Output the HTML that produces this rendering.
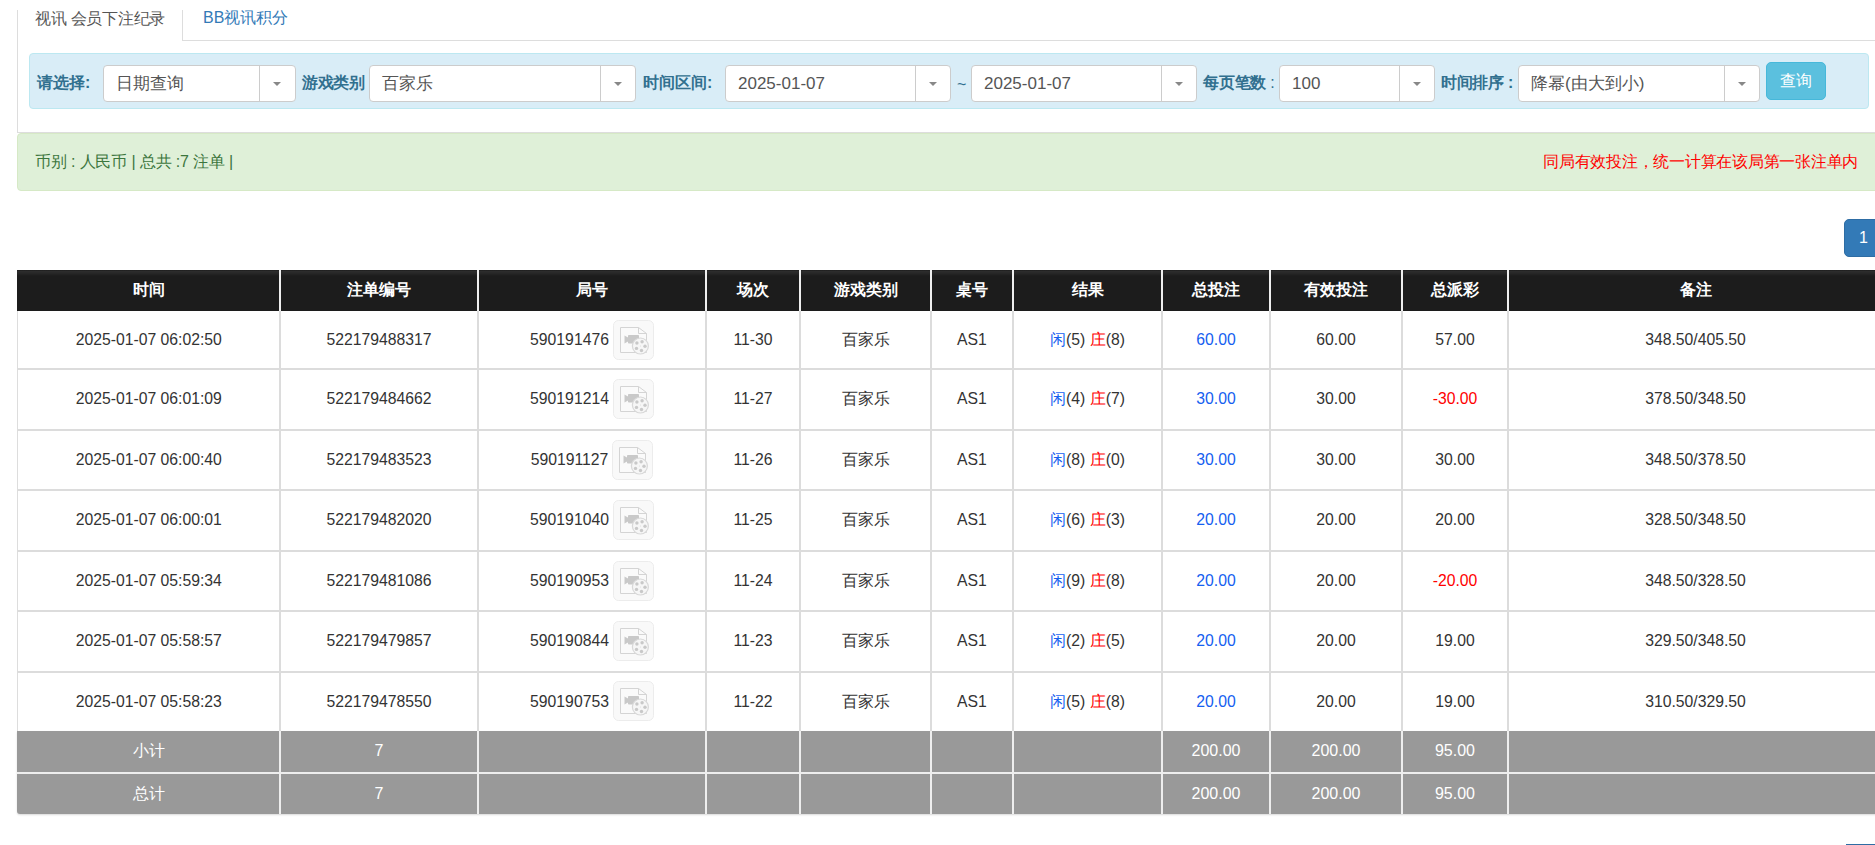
<!DOCTYPE html>
<html><head><meta charset="utf-8">
<style>
*{box-sizing:border-box;margin:0;padding:0}
html,body{width:1875px;height:845px;overflow:hidden;background:#fff;font-family:"Liberation Sans",sans-serif;color:#333;position:relative}
div{position:absolute;white-space:nowrap}
.c{text-align:center;font-size:15.75px;color:#333}
.h{text-align:center;font-size:16px;color:#fff;font-weight:bold}
.s{text-align:center;font-size:16px;color:#fff}
.blue{color:#1560f0} .red{color:#f00}
.ic{vertical-align:middle;margin-left:4px;position:relative;top:-1px}
.lbl{top:73px;font-size:16px;font-weight:bold;color:#31708f;line-height:20px}
.sel{top:65px;height:37px;background:#fff;border:1px solid #ccc;border-radius:4px}
.sel .v{left:12px;top:0;line-height:35px;font-size:17px;color:#555}
.sel .d{top:0;bottom:0;width:1px;background:#ccc}
.sel .ar{top:16px;width:0;height:0;border-left:4px solid transparent;border-right:4px solid transparent;border-top:4.5px solid #888}
</style></head><body>

<div style="left:17px;top:10px;width:1px;height:122px;background:#ddd"></div>
<div style="left:182px;top:10px;width:1px;height:31px;background:#ddd"></div>
<div style="left:182px;top:40px;width:1693px;height:1px;background:#ddd"></div>
<div style="left:35px;top:9px;font-size:16px;line-height:20px;color:#555;letter-spacing:-0.25px">视讯 会员下注纪录</div>
<div style="left:203px;top:8px;font-size:16px;line-height:20px;color:#337ab7">BB视讯积分</div>
<div style="left:29px;top:53px;width:1840px;height:56px;background:#d9edf7;border:1px solid #bce8f1;border-radius:4px"></div>
<div class="sel" style="left:103px;width:193px"><div class="v">日期查询</div><div class="d" style="left:155px"></div><div class="ar" style="left:169.0px"></div></div>
<div class="sel" style="left:369px;width:267px"><div class="v">百家乐</div><div class="d" style="left:230px"></div><div class="ar" style="left:243.5px"></div></div>
<div class="sel" style="left:725px;width:226px"><div class="v">2025-01-07</div><div class="d" style="left:189px"></div><div class="ar" style="left:202.5px"></div></div>
<div class="sel" style="left:971px;width:226px"><div class="v">2025-01-07</div><div class="d" style="left:189px"></div><div class="ar" style="left:202.5px"></div></div>
<div class="sel" style="left:1279px;width:156px"><div class="v">100</div><div class="d" style="left:119px"></div><div class="ar" style="left:132.5px"></div></div>
<div class="sel" style="left:1518px;width:242px"><div class="v">降幂(由大到小)</div><div class="d" style="left:205px"></div><div class="ar" style="left:218.5px"></div></div>
<div class="lbl" style="left:37px">请选择:</div>
<div class="lbl" style="left:302px;letter-spacing:-0.5px">游戏类别</div>
<div class="lbl" style="left:643px">时间区间:</div>
<div style="left:957px;top:75px;font-size:16px;line-height:20px;color:#31708f">~</div>
<div class="lbl" style="left:1203px;letter-spacing:-0.25px">每页笔数<span style="font-weight:normal"> :</span></div>
<div class="lbl" style="left:1441px;letter-spacing:-0.3px">时间排序 :</div>
<div style="left:1766px;top:62px;width:60px;height:38px;background:#5bc0de;border:1px solid #46b8da;border-radius:5px;color:#fff;font-size:16px;text-align:center;line-height:36px">查询</div>
<div style="left:17px;top:132px;width:1870px;height:1px;background:#ddd"></div>
<div style="left:17px;top:133px;width:1880px;height:58px;background:#dff0d8;border:1px solid #d6e9c6;border-radius:4px 0 0 4px"></div>
<div style="left:35px;top:152px;font-size:16px;line-height:20px;color:#3c763d;letter-spacing:-0.15px">币别 : 人民币 | 总共 :7 注单 |</div>
<div style="right:17px;top:152px;font-size:16px;line-height:20px;color:#f00;letter-spacing:-0.25px">同局有效投注，统一计算在该局第一张注单内</div>
<div style="left:1844px;top:219px;width:50px;height:38px;background:#337ab7;border:1px solid #2e6da4;border-radius:5px;color:#fff;font-size:16px;line-height:36px;padding-left:14px">1</div>
<div style="left:1846px;top:844px;width:40px;height:4px;background:#337ab7;border-top:1px solid #2e6da4"></div>
<div style="left:17px;top:270px;width:1870px;height:41px;background:linear-gradient(#1c1c1c 0px,#2c2c2c 1.5px,#262626 3.5px,#1c1c1c 6px)"></div>
<div style="left:17px;top:311px;width:1870px;height:420px;background:#fff;border-left:1px solid #ddd"></div>
<div style="left:17px;top:731px;width:1870px;height:83px;background:#999;border-radius:0 0 0 3px;box-shadow:0 1px 2px rgba(0,0,0,.15)"></div>
<div style="left:17px;top:368px;width:1870px;height:2px;background:#dcdcdc"></div>
<div style="left:17px;top:429px;width:1870px;height:2px;background:#dcdcdc"></div>
<div style="left:17px;top:489px;width:1870px;height:2px;background:#dcdcdc"></div>
<div style="left:17px;top:550px;width:1870px;height:2px;background:#dcdcdc"></div>
<div style="left:17px;top:610px;width:1870px;height:2px;background:#dcdcdc"></div>
<div style="left:17px;top:670.5px;width:1870px;height:2px;background:#dcdcdc"></div>
<div style="left:17px;top:772px;width:1870px;height:2px;background:#eee"></div>
<div style="left:279px;top:270px;width:2px;height:41px;background:#eee"></div>
<div style="left:279px;top:311px;width:2px;height:420px;background:#dcdcdc"></div>
<div style="left:279px;top:731px;width:2px;height:83px;background:#eee"></div>
<div style="left:477px;top:270px;width:2px;height:41px;background:#eee"></div>
<div style="left:477px;top:311px;width:2px;height:420px;background:#dcdcdc"></div>
<div style="left:477px;top:731px;width:2px;height:83px;background:#eee"></div>
<div style="left:705px;top:270px;width:2px;height:41px;background:#eee"></div>
<div style="left:705px;top:311px;width:2px;height:420px;background:#dcdcdc"></div>
<div style="left:705px;top:731px;width:2px;height:83px;background:#eee"></div>
<div style="left:799px;top:270px;width:2px;height:41px;background:#eee"></div>
<div style="left:799px;top:311px;width:2px;height:420px;background:#dcdcdc"></div>
<div style="left:799px;top:731px;width:2px;height:83px;background:#eee"></div>
<div style="left:930px;top:270px;width:2px;height:41px;background:#eee"></div>
<div style="left:930px;top:311px;width:2px;height:420px;background:#dcdcdc"></div>
<div style="left:930px;top:731px;width:2px;height:83px;background:#eee"></div>
<div style="left:1012px;top:270px;width:2px;height:41px;background:#eee"></div>
<div style="left:1012px;top:311px;width:2px;height:420px;background:#dcdcdc"></div>
<div style="left:1012px;top:731px;width:2px;height:83px;background:#eee"></div>
<div style="left:1161px;top:270px;width:2px;height:41px;background:#eee"></div>
<div style="left:1161px;top:311px;width:2px;height:420px;background:#dcdcdc"></div>
<div style="left:1161px;top:731px;width:2px;height:83px;background:#eee"></div>
<div style="left:1269px;top:270px;width:2px;height:41px;background:#eee"></div>
<div style="left:1269px;top:311px;width:2px;height:420px;background:#dcdcdc"></div>
<div style="left:1269px;top:731px;width:2px;height:83px;background:#eee"></div>
<div style="left:1401px;top:270px;width:2px;height:41px;background:#eee"></div>
<div style="left:1401px;top:311px;width:2px;height:420px;background:#dcdcdc"></div>
<div style="left:1401px;top:731px;width:2px;height:83px;background:#eee"></div>
<div style="left:1507px;top:270px;width:2px;height:41px;background:#eee"></div>
<div style="left:1507px;top:311px;width:2px;height:420px;background:#dcdcdc"></div>
<div style="left:1507px;top:731px;width:2px;height:83px;background:#eee"></div>
<div class="h" style="left:17.5px;top:269px;width:262.5px;height:41px;line-height:41px">时间</div>
<div class="h" style="left:280px;top:269px;width:198px;height:41px;line-height:41px">注单编号</div>
<div class="h" style="left:478px;top:269px;width:228px;height:41px;line-height:41px">局号</div>
<div class="h" style="left:706px;top:269px;width:94px;height:41px;line-height:41px">场次</div>
<div class="h" style="left:800px;top:269px;width:131px;height:41px;line-height:41px">游戏类别</div>
<div class="h" style="left:931px;top:269px;width:82px;height:41px;line-height:41px">桌号</div>
<div class="h" style="left:1013px;top:269px;width:149px;height:41px;line-height:41px">结果</div>
<div class="h" style="left:1162px;top:269px;width:108px;height:41px;line-height:41px">总投注</div>
<div class="h" style="left:1270px;top:269px;width:132px;height:41px;line-height:41px">有效投注</div>
<div class="h" style="left:1402px;top:269px;width:106px;height:41px;line-height:41px">总派彩</div>
<div class="h" style="left:1508px;top:269px;width:375px;height:41px;line-height:41px">备注</div>
<div class="c" style="left:17.5px;top:311px;width:262.5px;height:58px;line-height:58px">2025-01-07 06:02:50</div>
<div class="c" style="left:280px;top:311px;width:198px;height:58px;line-height:58px">522179488317</div>
<div class="c" style="left:478px;top:311px;width:228px;height:58px;line-height:58px">590191476<svg class="ic" width="41" height="40" viewBox="0 0 41 40"><rect x="0.5" y="0.5" width="40" height="39" rx="5" fill="#f9f9f9" stroke="#ececec"/><path d="M7.5 7.5H25.5L33.5 13.5V32.5H7.5Z" fill="#fafafa" stroke="#d4d4d4"/><path d="M25.5 7.5V13.5H33.5" fill="none" stroke="#d4d4d4"/><path d="M11.5 15.5L15 17.5V21.5L11.5 23.5Z" fill="#c9c9c9"/><rect x="15" y="15" width="11" height="8.5" rx="0.8" fill="#c9c9c9"/><circle cx="27.4" cy="26" r="8" fill="#f6f6f6" stroke="#d8d8d8" stroke-width="1.2"/><circle cx="32.0" cy="26.3" r="1.7" fill="#c9c9c9"/><circle cx="28.5" cy="30.5" r="1.7" fill="#c9c9c9"/><circle cx="23.5" cy="28.4" r="1.7" fill="#c9c9c9"/><circle cx="23.9" cy="23.0" r="1.7" fill="#c9c9c9"/><circle cx="29.1" cy="21.7" r="1.7" fill="#c9c9c9"/><circle cx="27.4" cy="26" r="0.5" fill="#d8d8d8"/></svg></div>
<div class="c" style="left:706px;top:311px;width:94px;height:58px;line-height:58px">11-30</div>
<div class="c" style="left:800px;top:311px;width:131px;height:58px;line-height:58px">百家乐</div>
<div class="c" style="left:931px;top:311px;width:82px;height:58px;line-height:58px">AS1</div>
<div class="c" style="left:1013px;top:311px;width:149px;height:58px;line-height:58px"><span class="blue">闲</span>(5) <span class="red">庄</span>(8)</div>
<div class="c" style="left:1162px;top:311px;width:108px;height:58px;line-height:58px"><span class="blue">60.00</span></div>
<div class="c" style="left:1270px;top:311px;width:132px;height:58px;line-height:58px">60.00</div>
<div class="c" style="left:1402px;top:311px;width:106px;height:58px;line-height:58px">57.00</div>
<div class="c" style="left:1508px;top:311px;width:375px;height:58px;line-height:58px">348.50/405.50</div>
<div class="c" style="left:17.5px;top:368px;width:262.5px;height:61px;line-height:61px">2025-01-07 06:01:09</div>
<div class="c" style="left:280px;top:368px;width:198px;height:61px;line-height:61px">522179484662</div>
<div class="c" style="left:478px;top:368px;width:228px;height:61px;line-height:61px">590191214<svg class="ic" width="41" height="40" viewBox="0 0 41 40"><rect x="0.5" y="0.5" width="40" height="39" rx="5" fill="#f9f9f9" stroke="#ececec"/><path d="M7.5 7.5H25.5L33.5 13.5V32.5H7.5Z" fill="#fafafa" stroke="#d4d4d4"/><path d="M25.5 7.5V13.5H33.5" fill="none" stroke="#d4d4d4"/><path d="M11.5 15.5L15 17.5V21.5L11.5 23.5Z" fill="#c9c9c9"/><rect x="15" y="15" width="11" height="8.5" rx="0.8" fill="#c9c9c9"/><circle cx="27.4" cy="26" r="8" fill="#f6f6f6" stroke="#d8d8d8" stroke-width="1.2"/><circle cx="32.0" cy="26.3" r="1.7" fill="#c9c9c9"/><circle cx="28.5" cy="30.5" r="1.7" fill="#c9c9c9"/><circle cx="23.5" cy="28.4" r="1.7" fill="#c9c9c9"/><circle cx="23.9" cy="23.0" r="1.7" fill="#c9c9c9"/><circle cx="29.1" cy="21.7" r="1.7" fill="#c9c9c9"/><circle cx="27.4" cy="26" r="0.5" fill="#d8d8d8"/></svg></div>
<div class="c" style="left:706px;top:368px;width:94px;height:61px;line-height:61px">11-27</div>
<div class="c" style="left:800px;top:368px;width:131px;height:61px;line-height:61px">百家乐</div>
<div class="c" style="left:931px;top:368px;width:82px;height:61px;line-height:61px">AS1</div>
<div class="c" style="left:1013px;top:368px;width:149px;height:61px;line-height:61px"><span class="blue">闲</span>(4) <span class="red">庄</span>(7)</div>
<div class="c" style="left:1162px;top:368px;width:108px;height:61px;line-height:61px"><span class="blue">30.00</span></div>
<div class="c" style="left:1270px;top:368px;width:132px;height:61px;line-height:61px">30.00</div>
<div class="c" style="left:1402px;top:368px;width:106px;height:61px;line-height:61px"><span class="red">-30.00</span></div>
<div class="c" style="left:1508px;top:368px;width:375px;height:61px;line-height:61px">378.50/348.50</div>
<div class="c" style="left:17.5px;top:430px;width:262.5px;height:60px;line-height:60px">2025-01-07 06:00:40</div>
<div class="c" style="left:280px;top:430px;width:198px;height:60px;line-height:60px">522179483523</div>
<div class="c" style="left:478px;top:430px;width:228px;height:60px;line-height:60px">590191127<svg class="ic" width="41" height="40" viewBox="0 0 41 40"><rect x="0.5" y="0.5" width="40" height="39" rx="5" fill="#f9f9f9" stroke="#ececec"/><path d="M7.5 7.5H25.5L33.5 13.5V32.5H7.5Z" fill="#fafafa" stroke="#d4d4d4"/><path d="M25.5 7.5V13.5H33.5" fill="none" stroke="#d4d4d4"/><path d="M11.5 15.5L15 17.5V21.5L11.5 23.5Z" fill="#c9c9c9"/><rect x="15" y="15" width="11" height="8.5" rx="0.8" fill="#c9c9c9"/><circle cx="27.4" cy="26" r="8" fill="#f6f6f6" stroke="#d8d8d8" stroke-width="1.2"/><circle cx="32.0" cy="26.3" r="1.7" fill="#c9c9c9"/><circle cx="28.5" cy="30.5" r="1.7" fill="#c9c9c9"/><circle cx="23.5" cy="28.4" r="1.7" fill="#c9c9c9"/><circle cx="23.9" cy="23.0" r="1.7" fill="#c9c9c9"/><circle cx="29.1" cy="21.7" r="1.7" fill="#c9c9c9"/><circle cx="27.4" cy="26" r="0.5" fill="#d8d8d8"/></svg></div>
<div class="c" style="left:706px;top:430px;width:94px;height:60px;line-height:60px">11-26</div>
<div class="c" style="left:800px;top:430px;width:131px;height:60px;line-height:60px">百家乐</div>
<div class="c" style="left:931px;top:430px;width:82px;height:60px;line-height:60px">AS1</div>
<div class="c" style="left:1013px;top:430px;width:149px;height:60px;line-height:60px"><span class="blue">闲</span>(8) <span class="red">庄</span>(0)</div>
<div class="c" style="left:1162px;top:430px;width:108px;height:60px;line-height:60px"><span class="blue">30.00</span></div>
<div class="c" style="left:1270px;top:430px;width:132px;height:60px;line-height:60px">30.00</div>
<div class="c" style="left:1402px;top:430px;width:106px;height:60px;line-height:60px">30.00</div>
<div class="c" style="left:1508px;top:430px;width:375px;height:60px;line-height:60px">348.50/378.50</div>
<div class="c" style="left:17.5px;top:489px;width:262.5px;height:61px;line-height:61px">2025-01-07 06:00:01</div>
<div class="c" style="left:280px;top:489px;width:198px;height:61px;line-height:61px">522179482020</div>
<div class="c" style="left:478px;top:489px;width:228px;height:61px;line-height:61px">590191040<svg class="ic" width="41" height="40" viewBox="0 0 41 40"><rect x="0.5" y="0.5" width="40" height="39" rx="5" fill="#f9f9f9" stroke="#ececec"/><path d="M7.5 7.5H25.5L33.5 13.5V32.5H7.5Z" fill="#fafafa" stroke="#d4d4d4"/><path d="M25.5 7.5V13.5H33.5" fill="none" stroke="#d4d4d4"/><path d="M11.5 15.5L15 17.5V21.5L11.5 23.5Z" fill="#c9c9c9"/><rect x="15" y="15" width="11" height="8.5" rx="0.8" fill="#c9c9c9"/><circle cx="27.4" cy="26" r="8" fill="#f6f6f6" stroke="#d8d8d8" stroke-width="1.2"/><circle cx="32.0" cy="26.3" r="1.7" fill="#c9c9c9"/><circle cx="28.5" cy="30.5" r="1.7" fill="#c9c9c9"/><circle cx="23.5" cy="28.4" r="1.7" fill="#c9c9c9"/><circle cx="23.9" cy="23.0" r="1.7" fill="#c9c9c9"/><circle cx="29.1" cy="21.7" r="1.7" fill="#c9c9c9"/><circle cx="27.4" cy="26" r="0.5" fill="#d8d8d8"/></svg></div>
<div class="c" style="left:706px;top:489px;width:94px;height:61px;line-height:61px">11-25</div>
<div class="c" style="left:800px;top:489px;width:131px;height:61px;line-height:61px">百家乐</div>
<div class="c" style="left:931px;top:489px;width:82px;height:61px;line-height:61px">AS1</div>
<div class="c" style="left:1013px;top:489px;width:149px;height:61px;line-height:61px"><span class="blue">闲</span>(6) <span class="red">庄</span>(3)</div>
<div class="c" style="left:1162px;top:489px;width:108px;height:61px;line-height:61px"><span class="blue">20.00</span></div>
<div class="c" style="left:1270px;top:489px;width:132px;height:61px;line-height:61px">20.00</div>
<div class="c" style="left:1402px;top:489px;width:106px;height:61px;line-height:61px">20.00</div>
<div class="c" style="left:1508px;top:489px;width:375px;height:61px;line-height:61px">328.50/348.50</div>
<div class="c" style="left:17.5px;top:551px;width:262.5px;height:60px;line-height:60px">2025-01-07 05:59:34</div>
<div class="c" style="left:280px;top:551px;width:198px;height:60px;line-height:60px">522179481086</div>
<div class="c" style="left:478px;top:551px;width:228px;height:60px;line-height:60px">590190953<svg class="ic" width="41" height="40" viewBox="0 0 41 40"><rect x="0.5" y="0.5" width="40" height="39" rx="5" fill="#f9f9f9" stroke="#ececec"/><path d="M7.5 7.5H25.5L33.5 13.5V32.5H7.5Z" fill="#fafafa" stroke="#d4d4d4"/><path d="M25.5 7.5V13.5H33.5" fill="none" stroke="#d4d4d4"/><path d="M11.5 15.5L15 17.5V21.5L11.5 23.5Z" fill="#c9c9c9"/><rect x="15" y="15" width="11" height="8.5" rx="0.8" fill="#c9c9c9"/><circle cx="27.4" cy="26" r="8" fill="#f6f6f6" stroke="#d8d8d8" stroke-width="1.2"/><circle cx="32.0" cy="26.3" r="1.7" fill="#c9c9c9"/><circle cx="28.5" cy="30.5" r="1.7" fill="#c9c9c9"/><circle cx="23.5" cy="28.4" r="1.7" fill="#c9c9c9"/><circle cx="23.9" cy="23.0" r="1.7" fill="#c9c9c9"/><circle cx="29.1" cy="21.7" r="1.7" fill="#c9c9c9"/><circle cx="27.4" cy="26" r="0.5" fill="#d8d8d8"/></svg></div>
<div class="c" style="left:706px;top:551px;width:94px;height:60px;line-height:60px">11-24</div>
<div class="c" style="left:800px;top:551px;width:131px;height:60px;line-height:60px">百家乐</div>
<div class="c" style="left:931px;top:551px;width:82px;height:60px;line-height:60px">AS1</div>
<div class="c" style="left:1013px;top:551px;width:149px;height:60px;line-height:60px"><span class="blue">闲</span>(9) <span class="red">庄</span>(8)</div>
<div class="c" style="left:1162px;top:551px;width:108px;height:60px;line-height:60px"><span class="blue">20.00</span></div>
<div class="c" style="left:1270px;top:551px;width:132px;height:60px;line-height:60px">20.00</div>
<div class="c" style="left:1402px;top:551px;width:106px;height:60px;line-height:60px"><span class="red">-20.00</span></div>
<div class="c" style="left:1508px;top:551px;width:375px;height:60px;line-height:60px">348.50/328.50</div>
<div class="c" style="left:17.5px;top:611px;width:262.5px;height:60.5px;line-height:60.5px">2025-01-07 05:58:57</div>
<div class="c" style="left:280px;top:611px;width:198px;height:60.5px;line-height:60.5px">522179479857</div>
<div class="c" style="left:478px;top:611px;width:228px;height:60.5px;line-height:60.5px">590190844<svg class="ic" width="41" height="40" viewBox="0 0 41 40"><rect x="0.5" y="0.5" width="40" height="39" rx="5" fill="#f9f9f9" stroke="#ececec"/><path d="M7.5 7.5H25.5L33.5 13.5V32.5H7.5Z" fill="#fafafa" stroke="#d4d4d4"/><path d="M25.5 7.5V13.5H33.5" fill="none" stroke="#d4d4d4"/><path d="M11.5 15.5L15 17.5V21.5L11.5 23.5Z" fill="#c9c9c9"/><rect x="15" y="15" width="11" height="8.5" rx="0.8" fill="#c9c9c9"/><circle cx="27.4" cy="26" r="8" fill="#f6f6f6" stroke="#d8d8d8" stroke-width="1.2"/><circle cx="32.0" cy="26.3" r="1.7" fill="#c9c9c9"/><circle cx="28.5" cy="30.5" r="1.7" fill="#c9c9c9"/><circle cx="23.5" cy="28.4" r="1.7" fill="#c9c9c9"/><circle cx="23.9" cy="23.0" r="1.7" fill="#c9c9c9"/><circle cx="29.1" cy="21.7" r="1.7" fill="#c9c9c9"/><circle cx="27.4" cy="26" r="0.5" fill="#d8d8d8"/></svg></div>
<div class="c" style="left:706px;top:611px;width:94px;height:60.5px;line-height:60.5px">11-23</div>
<div class="c" style="left:800px;top:611px;width:131px;height:60.5px;line-height:60.5px">百家乐</div>
<div class="c" style="left:931px;top:611px;width:82px;height:60.5px;line-height:60.5px">AS1</div>
<div class="c" style="left:1013px;top:611px;width:149px;height:60.5px;line-height:60.5px"><span class="blue">闲</span>(2) <span class="red">庄</span>(5)</div>
<div class="c" style="left:1162px;top:611px;width:108px;height:60.5px;line-height:60.5px"><span class="blue">20.00</span></div>
<div class="c" style="left:1270px;top:611px;width:132px;height:60.5px;line-height:60.5px">20.00</div>
<div class="c" style="left:1402px;top:611px;width:106px;height:60.5px;line-height:60.5px">19.00</div>
<div class="c" style="left:1508px;top:611px;width:375px;height:60.5px;line-height:60.5px">329.50/348.50</div>
<div class="c" style="left:17.5px;top:671.5px;width:262.5px;height:59.5px;line-height:59.5px">2025-01-07 05:58:23</div>
<div class="c" style="left:280px;top:671.5px;width:198px;height:59.5px;line-height:59.5px">522179478550</div>
<div class="c" style="left:478px;top:671.5px;width:228px;height:59.5px;line-height:59.5px">590190753<svg class="ic" width="41" height="40" viewBox="0 0 41 40"><rect x="0.5" y="0.5" width="40" height="39" rx="5" fill="#f9f9f9" stroke="#ececec"/><path d="M7.5 7.5H25.5L33.5 13.5V32.5H7.5Z" fill="#fafafa" stroke="#d4d4d4"/><path d="M25.5 7.5V13.5H33.5" fill="none" stroke="#d4d4d4"/><path d="M11.5 15.5L15 17.5V21.5L11.5 23.5Z" fill="#c9c9c9"/><rect x="15" y="15" width="11" height="8.5" rx="0.8" fill="#c9c9c9"/><circle cx="27.4" cy="26" r="8" fill="#f6f6f6" stroke="#d8d8d8" stroke-width="1.2"/><circle cx="32.0" cy="26.3" r="1.7" fill="#c9c9c9"/><circle cx="28.5" cy="30.5" r="1.7" fill="#c9c9c9"/><circle cx="23.5" cy="28.4" r="1.7" fill="#c9c9c9"/><circle cx="23.9" cy="23.0" r="1.7" fill="#c9c9c9"/><circle cx="29.1" cy="21.7" r="1.7" fill="#c9c9c9"/><circle cx="27.4" cy="26" r="0.5" fill="#d8d8d8"/></svg></div>
<div class="c" style="left:706px;top:671.5px;width:94px;height:59.5px;line-height:59.5px">11-22</div>
<div class="c" style="left:800px;top:671.5px;width:131px;height:59.5px;line-height:59.5px">百家乐</div>
<div class="c" style="left:931px;top:671.5px;width:82px;height:59.5px;line-height:59.5px">AS1</div>
<div class="c" style="left:1013px;top:671.5px;width:149px;height:59.5px;line-height:59.5px"><span class="blue">闲</span>(5) <span class="red">庄</span>(8)</div>
<div class="c" style="left:1162px;top:671.5px;width:108px;height:59.5px;line-height:59.5px"><span class="blue">20.00</span></div>
<div class="c" style="left:1270px;top:671.5px;width:132px;height:59.5px;line-height:59.5px">20.00</div>
<div class="c" style="left:1402px;top:671.5px;width:106px;height:59.5px;line-height:59.5px">19.00</div>
<div class="c" style="left:1508px;top:671.5px;width:375px;height:59.5px;line-height:59.5px">310.50/329.50</div>
<div class="s" style="left:17.5px;top:730px;width:262.5px;height:42px;line-height:42px">小计</div>
<div class="s" style="left:280px;top:730px;width:198px;height:42px;line-height:42px">7</div>
<div class="s" style="left:1162px;top:730px;width:108px;height:42px;line-height:42px">200.00</div>
<div class="s" style="left:1270px;top:730px;width:132px;height:42px;line-height:42px">200.00</div>
<div class="s" style="left:1402px;top:730px;width:106px;height:42px;line-height:42px">95.00</div>
<div class="s" style="left:17.5px;top:773px;width:262.5px;height:41px;line-height:41px">总计</div>
<div class="s" style="left:280px;top:773px;width:198px;height:41px;line-height:41px">7</div>
<div class="s" style="left:1162px;top:773px;width:108px;height:41px;line-height:41px">200.00</div>
<div class="s" style="left:1270px;top:773px;width:132px;height:41px;line-height:41px">200.00</div>
<div class="s" style="left:1402px;top:773px;width:106px;height:41px;line-height:41px">95.00</div>
</body></html>
